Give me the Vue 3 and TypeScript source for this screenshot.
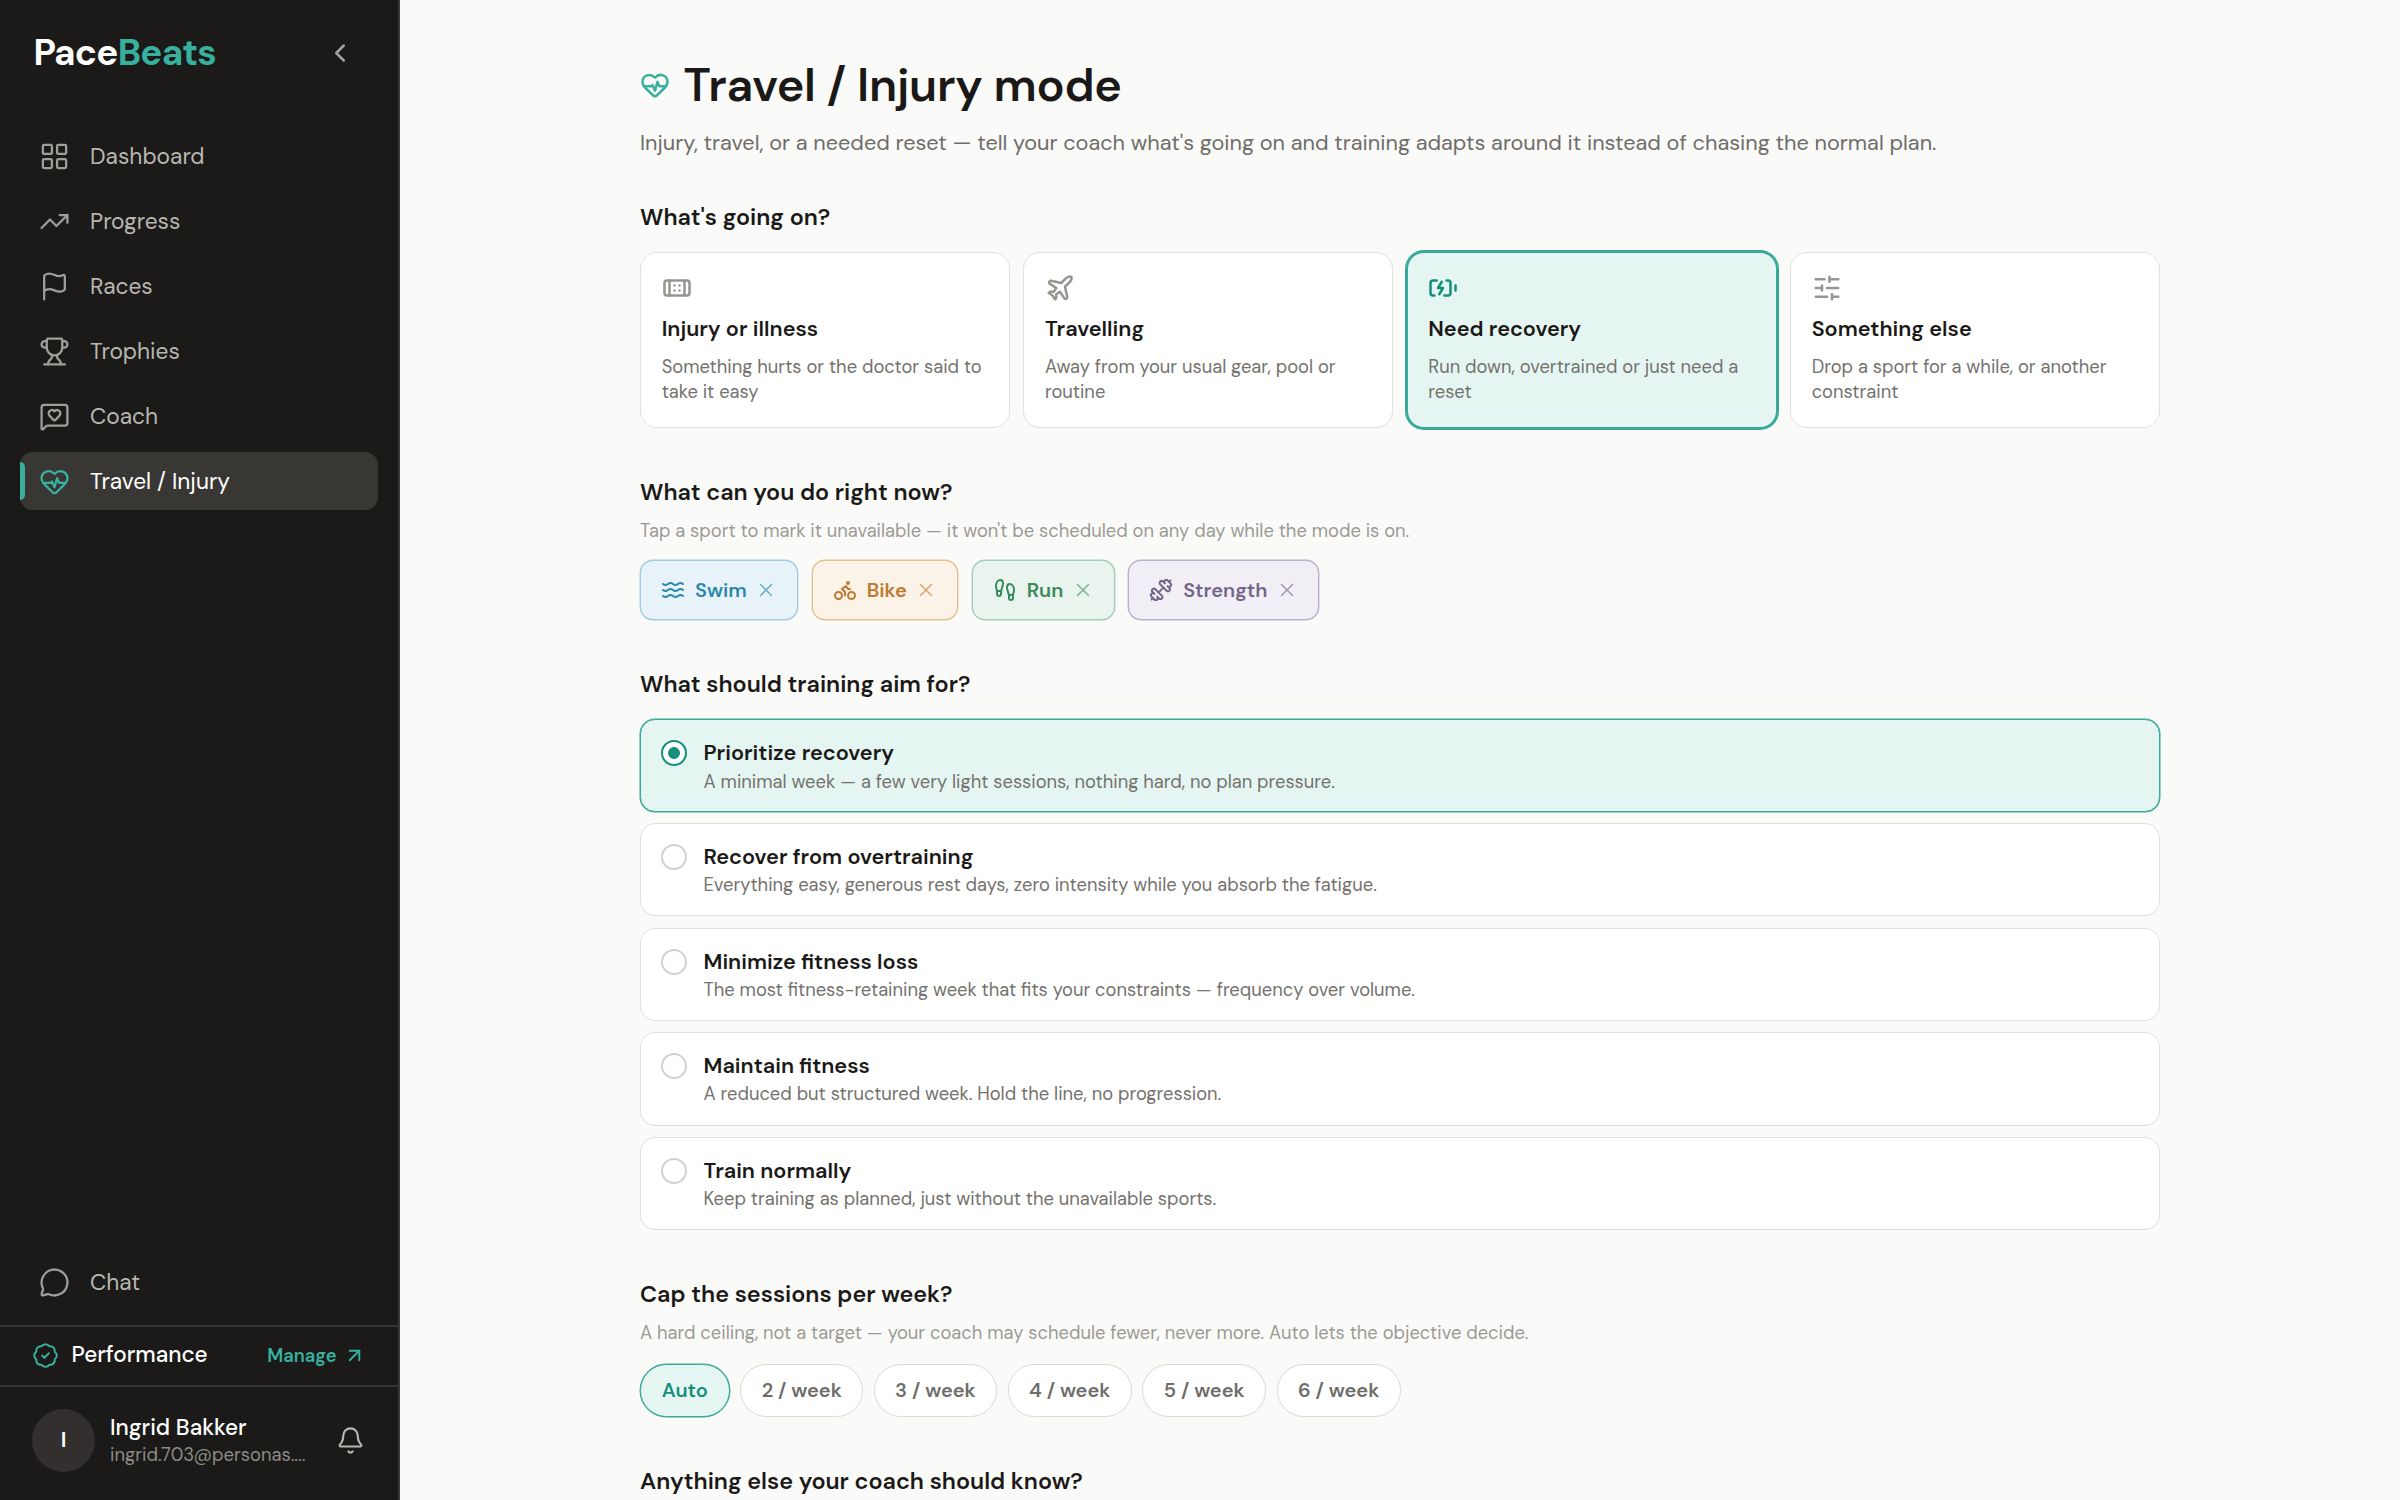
<script setup lang="ts">
interface NavItem { label: string; icon: string; active?: boolean }
interface Reason { title: string; text: string; icon: string; on?: boolean }
interface Aim { title: string; text: string; on?: boolean }

const icons: Record<string, string> = {
  grid: '<rect width="7" height="7" x="3" y="3" rx="1"/><rect width="7" height="7" x="14" y="3" rx="1"/><rect width="7" height="7" x="14" y="14" rx="1"/><rect width="7" height="7" x="3" y="14" rx="1"/>',
  trend: '<path d="M16 7h6v6"/><path d="m22 7-8.5 8.5-5-5L2 17"/>',
  flag: '<path d="M4 22V4a1 1 0 0 1 .4-.8A6 6 0 0 1 8 2c3 0 5 2 7.333 2q2 0 3.067-.8A1 1 0 0 1 20 4v10a1 1 0 0 1-.4.8A6 6 0 0 1 16 16c-3 0-5-2-8-2a6 6 0 0 0-4 1.528"/>',
  trophy: '<path d="M10 14.66v1.626a2 2 0 0 1-.976 1.696A5 5 0 0 0 7 21.978"/><path d="M14 14.66v1.626a2 2 0 0 0 .976 1.696A5 5 0 0 1 17 21.978"/><path d="M18 9h1.5a1 1 0 0 0 0-5H18"/><path d="M4 22h16"/><path d="M6 9a6 6 0 0 0 12 0V3a1 1 0 0 0-1-1H7a1 1 0 0 0-1 1z"/><path d="M6 9H4.5a1 1 0 0 1 0-5H6"/>',
  coach: '<path d="M22 17a2 2 0 0 1-2 2H6.828a2 2 0 0 0-1.414.586l-2.202 2.202A.71.71 0 0 1 2 21.286V5a2 2 0 0 1 2-2h16a2 2 0 0 1 2 2z"/><path d="M7.5 9.5c0 .687.265 1.383.697 1.844l3.009 3.264a1.14 1.14 0 0 0 .407.314 1 1 0 0 0 .783-.004 1.14 1.14 0 0 0 .398-.31l3.008-3.264A2.77 2.77 0 0 0 16.5 9.5 2.5 2.5 0 0 0 12 8a2.5 2.5 0 0 0-4.5 1.5"/>',
  pulse: '<path d="M2 9.5a5.5 5.5 0 0 1 9.591-3.676.56.56 0 0 0 .818 0A5.49 5.49 0 0 1 22 9.5c0 2.29-1.5 4-3 5.5l-5.492 5.313a2 2 0 0 1-3 .019L5 15c-1.5-1.5-3-3.2-3-5.5"/><path d="M3.22 13H9.5l.5-1 2 4.5 2-7 1.5 3.5h5.27"/>',
  chat: '<path d="M2.992 16.342a2 2 0 0 1 .094 1.167l-1.065 3.29a1 1 0 0 0 1.236 1.168l3.413-.998a2 2 0 0 1 1.099.092 10 10 0 1 0-4.777-4.719"/>',
  badge: '<path d="M3.85 8.62a4 4 0 0 1 4.78-4.77 4 4 0 0 1 6.74 0 4 4 0 0 1 4.78 4.78 4 4 0 0 1 0 6.74 4 4 0 0 1-4.77 4.78 4 4 0 0 1-6.75 0 4 4 0 0 1-4.78-4.77 4 4 0 0 1 0-6.76Z"/><path d="m9 12 2 2 4-4"/>',
  arrow: '<path d="M7 7h10v10"/><path d="M7 17 17 7"/>',
  bell: '<path d="M10.268 21a2 2 0 0 0 3.464 0"/><path d="M3.262 15.326A1 1 0 0 0 4 17h16a1 1 0 0 0 .74-1.673C19.41 13.956 18 12.499 18 8A6 6 0 0 0 6 8c0 4.499-1.411 5.956-2.738 7.326"/>',
  chevron: '<path d="m15 18-6-6 6-6"/>',
  bandage: '<path d="M10 10.01h.01"/><path d="M10 14.01h.01"/><path d="M14 10.01h.01"/><path d="M14 14.01h.01"/><path d="M18 6v12"/><path d="M6 6v12"/><rect x="2" y="6" width="20" height="12" rx="2"/>',
  plane: '<path d="M17.8 19.2 16 11l3.5-3.5C21 6 21.5 4 21 3c-1-.5-3 0-4.5 1.5L13 8 4.8 6.2c-.5-.1-.9.1-1.1.5l-.3.5c-.2.5-.1 1 .3 1.3L9 12l-2 3H4l-1 1 3 2 2 3 1-1v-3l3-2 3.5 5.3c.3.4.8.5 1.3.3l.5-.2c.4-.3.6-.7.5-1.2z"/>',
  battery: '<path d="m11 7-3 5h4l-3 5"/><path d="M14.856 6H16a2 2 0 0 1 2 2v8a2 2 0 0 1-2 2h-2.935"/><path d="M22 14v-4"/><path d="M5.14 18H4a2 2 0 0 1-2-2V8a2 2 0 0 1 2-2h2.936"/>',
  sliders: '<path d="M10 5H3"/><path d="M12 19H3"/><path d="M14 3v4"/><path d="M16 17v4"/><path d="M21 12h-9"/><path d="M21 19h-5"/><path d="M21 5h-7"/><path d="M8 10v4"/><path d="M8 12H3"/>',
  waves: '<path d="M2 6c.6.5 1.2 1 2.5 1C7 7 7 5 9.5 5c2.6 0 2.4 2 5 2 2.5 0 2.5-2 5-2 1.3 0 1.9.5 2.5 1"/><path d="M2 12c.6.5 1.2 1 2.5 1 2.5 0 2.5-2 5-2 2.6 0 2.4 2 5 2 2.5 0 2.5-2 5-2 1.3 0 1.9.5 2.5 1"/><path d="M2 18c.6.5 1.2 1 2.5 1 2.5 0 2.5-2 5-2 2.6 0 2.4 2 5 2 2.5 0 2.5-2 5-2 1.3 0 1.9.5 2.5 1"/>',
  bike: '<circle cx="18.5" cy="17.5" r="3.5"/><circle cx="5.5" cy="17.5" r="3.5"/><circle cx="15" cy="5" r="1"/><path d="M12 17.5V14l-3-3 4-3 2 3h2"/>',
  feet: '<path d="M4 16v-2.38C4 11.5 2.97 10.5 3 8c.03-2.72 1.49-6 4.5-6C9.37 2 10 3.8 10 5.5c0 3.11-2 5.66-2 8.68V16a2 2 0 1 1-4 0Z"/><path d="M20 20v-2.38c0-2.12 1.03-3.12 1-5.62-.03-2.72-1.49-6-4.5-6C14.63 6 14 7.8 14 9.5c0 3.11 2 5.66 2 8.68V20a2 2 0 1 0 4 0Z"/><path d="M16 17h4"/><path d="M4 13h4"/>',
  dumbbell: '<path d="M17.596 12.768a2 2 0 1 0 2.829-2.829l-1.768-1.767a2 2 0 0 0 2.828-2.829l-2.828-2.828a2 2 0 0 0-2.829 2.828l-1.767-1.768a2 2 0 1 0-2.829 2.829z"/><path d="m2.5 21.5 1.4-1.4"/><path d="m20.1 3.9 1.4-1.4"/><path d="M5.343 21.485a2 2 0 1 0 2.829-2.828l1.767 1.768a2 2 0 1 0 2.829-2.829l-6.364-6.364a2 2 0 1 0-2.829 2.829l1.768 1.767a2 2 0 0 0-2.828 2.829z"/><path d="m9.6 14.4 4.8-4.8"/>',
  close: '<path d="M18 6 6 18"/><path d="m6 6 12 12"/>',
}

const nav: NavItem[] = [
  { label: 'Dashboard', icon: 'grid' },
  { label: 'Progress', icon: 'trend' },
  { label: 'Races', icon: 'flag' },
  { label: 'Trophies', icon: 'trophy' },
  { label: 'Coach', icon: 'coach' },
  { label: 'Travel / Injury', icon: 'pulse', active: true },
]
const reasons: Reason[] = [
  { title: 'Injury or illness', text: 'Something hurts or the doctor said to take it easy', icon: 'bandage' },
  { title: 'Travelling', text: 'Away from your usual gear, pool or routine', icon: 'plane' },
  { title: 'Need recovery', text: 'Run down, overtrained or just need a reset', icon: 'battery', on: true },
  { title: 'Something else', text: 'Drop a sport for a while, or another constraint', icon: 'sliders' },
]
const sports = [
  { label: 'Swim', icon: 'waves', kind: 'swim' },
  { label: 'Bike', icon: 'bike', kind: 'bike' },
  { label: 'Run', icon: 'feet', kind: 'run' },
  { label: 'Strength', icon: 'dumbbell', kind: 'strength' },
]
const aims: Aim[] = [
  { title: 'Prioritize recovery', text: 'A minimal week — a few very light sessions, nothing hard, no plan pressure.', on: true },
  { title: 'Recover from overtraining', text: 'Everything easy, generous rest days, zero intensity while you absorb the fatigue.' },
  { title: 'Minimize fitness loss', text: 'The most fitness-retaining week that fits your constraints — frequency over volume.' },
  { title: 'Maintain fitness', text: 'A reduced but structured week. Hold the line, no progression.' },
  { title: 'Train normally', text: 'Keep training as planned, just without the unavailable sports.' },
]
const caps = ['Auto', '2 / week', '3 / week', '4 / week', '5 / week', '6 / week']
</script>

<template>
  <div class="app">
    <aside class="side">
      <div class="brand">
        <div class="logo"><span>Pace</span><span class="teal">Beats</span></div>
        <svg class="ic chev" viewBox="0 0 24 24" v-html="icons.chevron" />
      </div>
      <nav class="nav">
        <a v-for="n in nav" :key="n.label" class="item" :class="{ active: n.active }">
          <svg class="ic" viewBox="0 0 24 24" v-html="icons[n.icon]" /><span>{{ n.label }}</span>
        </a>
      </nav>
      <a class="item chat"><svg class="ic" viewBox="0 0 24 24" v-html="icons.chat" /><span>Chat</span></a>
      <div class="plan">
        <svg class="ic badge" viewBox="0 0 24 24" v-html="icons.badge" />
        <span class="plan-name">Performance</span>
        <span class="manage">Manage</span>
        <svg class="ic arrow" viewBox="0 0 24 24" v-html="icons.arrow" />
      </div>
      <div class="user">
        <div class="avatar">I</div>
        <div class="who">
          <div class="name">Ingrid Bakker</div>
          <div class="mail">ingrid.703@personas....</div>
        </div>
        <svg class="ic bell" viewBox="0 0 24 24" v-html="icons.bell" />
      </div>
    </aside>

    <main class="main">
      <div class="col">
        <h1><svg class="ic" viewBox="0 0 24 24" v-html="icons.pulse" /><span>Travel / Injury mode</span></h1>
        <p class="lead">Injury, travel, or a needed reset — tell your coach what's going on and training adapts around it instead of chasing the normal plan.</p>

        <h2 class="h-reason">What's going on?</h2>
        <div class="cards">
          <div v-for="r in reasons" :key="r.title" class="card" :class="{ on: r.on }">
            <svg class="ic" viewBox="0 0 24 24" v-html="icons[r.icon]" />
            <div class="t">{{ r.title }}</div>
            <div class="d">{{ r.text }}</div>
          </div>
        </div>

        <h2 class="h-sports">What can you do right now?</h2>
        <p class="hint">Tap a sport to mark it unavailable — it won't be scheduled on any day while the mode is on.</p>
        <div class="sports">
          <div v-for="s in sports" :key="s.label" class="sport" :class="s.kind">
            <svg class="ic" viewBox="0 0 24 24" v-html="icons[s.icon]" /><span>{{ s.label }}</span>
            <svg class="ic x" viewBox="0 0 24 24" v-html="icons.close" />
          </div>
        </div>

        <h2 class="h-aims">What should training aim for?</h2>
        <div class="aims">
          <div v-for="a in aims" :key="a.title" class="aim" :class="{ on: a.on }">
            <span class="radio" />
            <div>
              <div class="t">{{ a.title }}</div>
              <div class="d">{{ a.text }}</div>
            </div>
          </div>
        </div>

        <h2 class="h-caps">Cap the sessions per week?</h2>
        <p class="hint">A hard ceiling, not a target — your coach may schedule fewer, never more. Auto lets the objective decide.</p>
        <div class="caps">
          <span v-for="(c, i) in caps" :key="c" class="cap" :class="{ on: i === 0 }">{{ c }}</span>
        </div>

        <h2 class="h-note">Anything else your coach should know?</h2>
      </div>
    </main>
  </div>
</template>

<style>
body { margin: 0; overflow: hidden; }
</style>

<style scoped>
.app { display: flex; width: 2400px; height: 1500px; overflow: hidden; font-family: "DM Sans", Inter, sans-serif; background: #fafaf8; color: #1a1917; }
.app * { box-sizing: border-box; }
.ic { display: block; flex: none; width: 30px; height: 30px; fill: none; stroke: currentColor; stroke-width: 1.75; stroke-linecap: round; stroke-linejoin: round; }

.side { width: 400px; flex: none; height: 1500px; background: #1b1a18; border-right: 2px solid #3a3936; display: flex; flex-direction: column; }
.brand { height: 105px; display: flex; align-items: center; justify-content: space-between; padding: 0 43px 0 33.5px; }
.logo { font-size: 36.67px; font-weight: 700; letter-spacing: -.02em; color: #fff; line-height: 44px; }
.teal { color: #38b09f; }
.chev { color: #a3a19d; stroke-width: 2; }
.nav { padding: 22px 20px 0 20px; display: flex; flex-direction: column; gap: 7px; flex: 1; }
.item { height: 58px; display: flex; align-items: center; gap: 20.5px; padding-left: 19.5px; border-radius: 13px; font-size: 22.7px; color: #b8b6b1; position: relative; }
.item .ic { width: 31px; height: 31px; margin: 0 -.5px; color: #a09e9a; }
.item.active { background: #393733; color: #fff; }
.item.active .ic { color: #38b09f; }
.item.active::before { content: ""; position: absolute; left: 0; top: 10px; width: 5px; height: 38px; border-radius: 0 5px 5px 0; background: #38b09f; }
.chat { margin: 0 20px 14px 20px; }
.plan { height: 60px; border-top: 2px solid #33322f; display: flex; align-items: center; padding: 0 32px 1px 32px; color: #38b09f; }
.badge { width: 27px; height: 27px; margin-right: 12.5px; }
.plan-name { font-size: 22.5px; font-weight: 500; color: #fff; flex: 1; line-height: 30px; padding-bottom: 2px; }
.manage { font-size: 18.33px; font-weight: 600; margin-right: 6.5px; }
.arrow { width: 23px; height: 23px; stroke-width: 2; }
.user { height: 115px; border-top: 2px solid #33322f; display: flex; align-items: center; padding: 0 34px 7px 32px; }
.avatar { width: 63px; height: 63px; border-radius: 50%; background: #332f2f; color: #fff; font-size: 21.67px; font-weight: 600; display: flex; align-items: center; justify-content: center; margin-right: 15px; }
.who { flex: 1; white-space: nowrap; padding-top: 2px; }
.name { font-size: 22.5px; font-weight: 500; color: #fff; line-height: 28px; }
.mail { font-size: 18.4px; color: #8c8a86; line-height: 27px; }
.bell { width: 29px; height: 29px; margin-right: -.5px; color: #b8b6b1; }

.main { flex: 1; padding: 0 240px; }
.col { width: 1520px; }
h1, h2, p { margin: 0; }
h1 { padding-top: 57px; height: 113px; display: flex; align-items: center; gap: 13.5px; font-size: 46.67px; font-weight: 600; letter-spacing: -.27px; line-height: 56px; }
h1 span { margin-top: -1px; }
h1 .ic { color: #38b09f; stroke-width: 2; }
.lead { margin-top: 13px; height: 34px; line-height: 34px; font-size: 21.67px; color: #6e6d69; white-space: nowrap; }
h2 { font-size: 23.33px; font-weight: 600; line-height: 32px; height: 32px; white-space: nowrap; }
.h-reason { margin-top: 41px; margin-bottom: 19px; }
.cards { display: grid; grid-template-columns: repeat(4, 1fr); gap: 13.33px; }
.card { height: 176px; border: 1px solid #e2e1de; border-radius: 17px; background: #fff; padding: 20px 20px 0 20.67px; }
.card .ic { color: #979590; stroke-width: 2; }
.t { font-size: 21.67px; font-weight: 600; line-height: 30px; }
.card .t { margin-top: 11px; }
.d { font-size: 18.33px; color: #74726e; line-height: 25px; }
.card .d { margin-top: 11px; }
.card.on { background: #e5f6f2; border-color: #38a898; box-shadow: 0 0 0 2px #38a898; }
.card.on .ic { color: #148f7c; }
.h-sports { margin-top: 48px; }
.hint { margin-top: 9px; height: 28px; line-height: 28px; font-size: 18.33px; color: #9c9a95; white-space: nowrap; }
.sports { margin-top: 15px; display: flex; gap: 13.33px; }
.sport { height: 60px; display: flex; align-items: center; border: 1px solid; border-radius: 13px; padding: 0 20px; font-size: 20px; font-weight: 600; }
.sport .ic { width: 24px; height: 24px; stroke-width: 2; }
.sport span { margin: 0 8.6px 0 10px; }
.sport .x { width: 22px; height: 22px; opacity: .6; stroke-width: 1.75; }
.swim { color: #2c87a8; background: #e7f3f8; border-color: #9fcddd; box-shadow: 0 0 0 .4px #9fcddd; }
.bike { color: #bf7a30; background: #fbf3e8; border-color: #e5c08d; box-shadow: 0 0 0 .4px #e5c08d; }
.run { color: #398a5b; background: #e9f4ee; border-color: #a2cfb8; box-shadow: 0 0 0 .4px #a2cfb8; }
.strength { color: #746689; background: #f2eef5; border-color: #bbb0cd; box-shadow: 0 0 0 .4px #bbb0cd; }
.h-aims { margin-top: 48px; margin-bottom: 18.5px; }
.aims { display: flex; flex-direction: column; gap: 11.3px; }
.aim { height: 93.33px; border: 1px solid #e0dfdc; border-radius: 15px; background: #fff; display: flex; padding: 18px 20px 0; gap: 16.5px; }
.aim.on { background: #e5f6f2; border-color: #38a898; box-shadow: 0 0 0 .5px #38a898; }
.radio { width: 26px; height: 26px; border-radius: 50%; border: 2px solid #d2d1ce; background: #fff; flex: none; margin-top: 2px; }
.aim.on .radio { border-color: #148f7c; background: radial-gradient(circle, #148f7c 5.5px, #fff 6.3px); }
.aim .d { margin-top: 1px; }
.aim.on .d { margin-top: 2px; }
.h-caps { margin-top: 47.5px; }
.caps { margin-top: 16.7px; display: flex; gap: 10.67px; }
.cap { height: 53px; border: 1px solid #dad9d6; border-radius: 27px; background: #fff; color: #6e6d69; font-size: 20px; font-weight: 600; line-height: 51px; padding: 0 20.33px; }
.cap.on { color: #148f7c; background: #e5f6f2; border-color: #38a898; box-shadow: 0 0 0 .5px #38a898; padding: 0 20.8px; }
.h-note { margin-top: 48.5px; }
</style>
